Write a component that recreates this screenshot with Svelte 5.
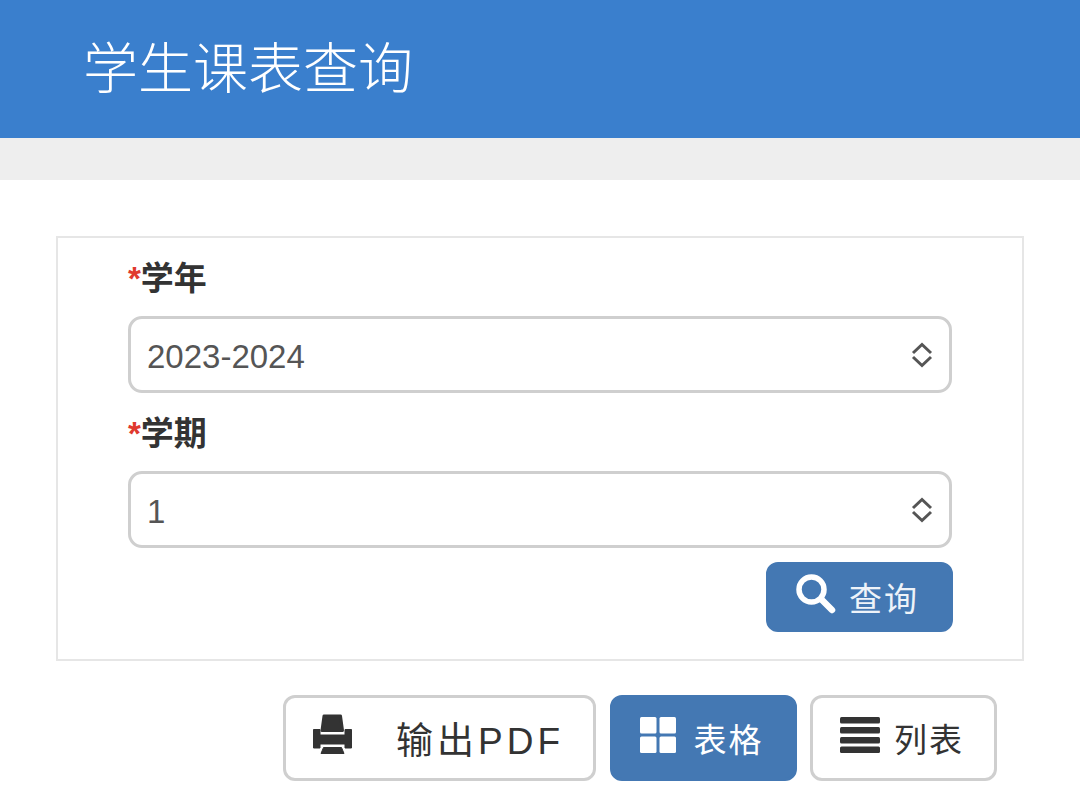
<script>
  let year = $state("2023-2024");
  let term = $state("1");
  let view = $state("table");
</script>

{#snippet chevrons()}
  <svg class="chevrons" width="22" height="26" viewBox="0 0 22 26" fill="none" stroke="#555" stroke-width="3">
    <path d="M2 11 L11 2.5 L20 11" />
    <path d="M2 15 L11 23.5 L20 15" />
  </svg>
{/snippet}

<header class="top">
  <h1>学生课表查询</h1>
</header>
<div class="band"></div>

<main class="page">
  <section class="panel">
    <div class="field">
      <label for="year"><span class="req">*</span>学年</label>
      <div class="select-wrap">
        <select id="year" bind:value={year}>
          <option>2022-2023</option>
          <option>2023-2024</option>
        </select>
        {@render chevrons()}
      </div>
    </div>
    <div class="field">
      <label for="term"><span class="req">*</span>学期</label>
      <div class="select-wrap">
        <select id="term" bind:value={term}>
          <option>1</option>
          <option>2</option>
        </select>
        {@render chevrons()}
      </div>
    </div>
    <div class="actions">
      <button class="btn primary search">
        <svg width="40" height="40" viewBox="0 0 40 40" fill="none" stroke="#fff">
          <circle cx="15.5" cy="15.5" r="12.5" stroke-width="5.5" />
          <path d="M25.5 25.5 L36 36" stroke-width="6.5" stroke-linecap="round" />
        </svg>
        <span>查询</span>
      </button>
    </div>
  </section>

  <div class="toolbar">
    <button class="btn pdf">
      <svg width="39" height="40" viewBox="0 0 39 40" fill="#333" stroke="#333" stroke-linejoin="round" stroke-width="1">
        <path d="M11 2 H27.5 L29.5 16.5 H9 Z" stroke-width="3" />
        <path d="M0.5 15.5 H7 V21 H32 V15.5 H38.5 V34 H32 V30 H7 V34 H0.5 Z" />
        <path d="M10.5 33.5 H28.5 L31 39.5 H8 Z" />
      </svg>
      <span>输出PDF</span>
    </button>
    <button class="btn view" class:primary={view === "table"} onclick={() => (view = "table")}>
      <svg width="36" height="36" viewBox="0 0 36 36" fill="currentColor">
        <rect x="0" y="0" width="16.5" height="16.5" rx="1.5" />
        <rect x="19.5" y="0" width="16.5" height="16.5" rx="1.5" />
        <rect x="0" y="19.5" width="16.5" height="16.5" rx="1.5" />
        <rect x="19.5" y="19.5" width="16.5" height="16.5" rx="1.5" />
      </svg>
      <span>表格</span>
    </button>
    <button class="btn view" class:primary={view === "list"} onclick={() => (view = "list")}>
      <svg width="40" height="36" viewBox="0 0 40 36" fill="currentColor">
        <rect x="0" y="0" width="40" height="6.5" rx="1.5" />
        <rect x="0" y="10" width="40" height="6.5" rx="1.5" />
        <rect x="0" y="20" width="40" height="6.5" rx="1.5" />
        <rect x="0" y="29.5" width="40" height="6.5" rx="1.5" />
      </svg>
      <span>列表</span>
    </button>
  </div>
</main>

<style>
  :global(body) {
    background: #fff;
    font-family: "Liberation Sans", "Noto Sans CJK SC", sans-serif;
    color: #333;
  }

  .top {
    height: 138px;
    background: #3a7fcd;
    display: flex;
    align-items: center;
    padding: 1px 0 0 83px;
    box-sizing: border-box;
  }

  h1 {
    margin: 0;
    font-size: 55px;
    font-weight: 300;
    color: #fff;
    line-height: 1;
  }

  .band {
    height: 42px;
    background: #eee;
  }

  .page {
    padding: 56px 56px 0;
  }

  .panel {
    box-sizing: border-box;
    width: 968px;
    height: 425px;
    border: 2px solid #e6e6e6;
    padding: 20px 70px 0;
    display: flex;
    flex-direction: column;
  }

  .field {
    margin-bottom: 14px;
  }

  .field + .field {
    margin-top: 6px;
  }

  label {
    display: block;
    height: 42px;
    font-size: 33px;
    font-weight: 700;
    line-height: 42px;
    margin-bottom: 16px;
    color: #333;
  }

  .req {
    color: #e0392e;
  }

  .select-wrap {
    position: relative;
  }

  select {
    display: block;
    width: 100%;
    height: 77px;
    box-sizing: border-box;
    appearance: none;
    background: #fff;
    border: 3px solid #cfcfcf;
    border-radius: 14px;
    padding: 3px 16px 0;
    font: inherit;
    font-size: 33px;
    color: #555;
  }

  .chevrons {
    position: absolute;
    right: 19px;
    top: 26px;
    pointer-events: none;
  }

  .actions {
    display: flex;
    justify-content: flex-end;
    margin-right: -1px;
  }

  .btn {
    display: flex;
    align-items: center;
    box-sizing: border-box;
    height: 86px;
    background: #fff;
    border: 3px solid #cfcfcf;
    border-radius: 12px;
    color: #333;
    font: inherit;
    font-size: 33px;
    letter-spacing: 2px;
    padding: 0;
  }

  .btn svg {
    margin-top: -6px;
  }

  .btn.primary {
    background: #4478b3;
    border-color: #4478b3;
    color: #fff;
  }

  .search {
    width: 187px;
    height: 70px;
    padding-left: 27px;
    gap: 13px;
  }

  .search span {
    color: #eef3f9;
  }

  .toolbar {
    display: flex;
    justify-content: flex-end;
    gap: 13.5px;
    margin-top: 34px;
    padding-right: 27px;
  }

  .pdf {
    width: 313px;
    padding-left: 27px;
    gap: 44px;
    font-size: 37px;
    letter-spacing: 4px;
  }

  .pdf svg {
    margin-top: -8px;
  }

  .view {
    width: 187px;
    padding-left: 27px;
    gap: 18px;
  }

  .view:last-child {
    gap: 14px;
  }
</style>
